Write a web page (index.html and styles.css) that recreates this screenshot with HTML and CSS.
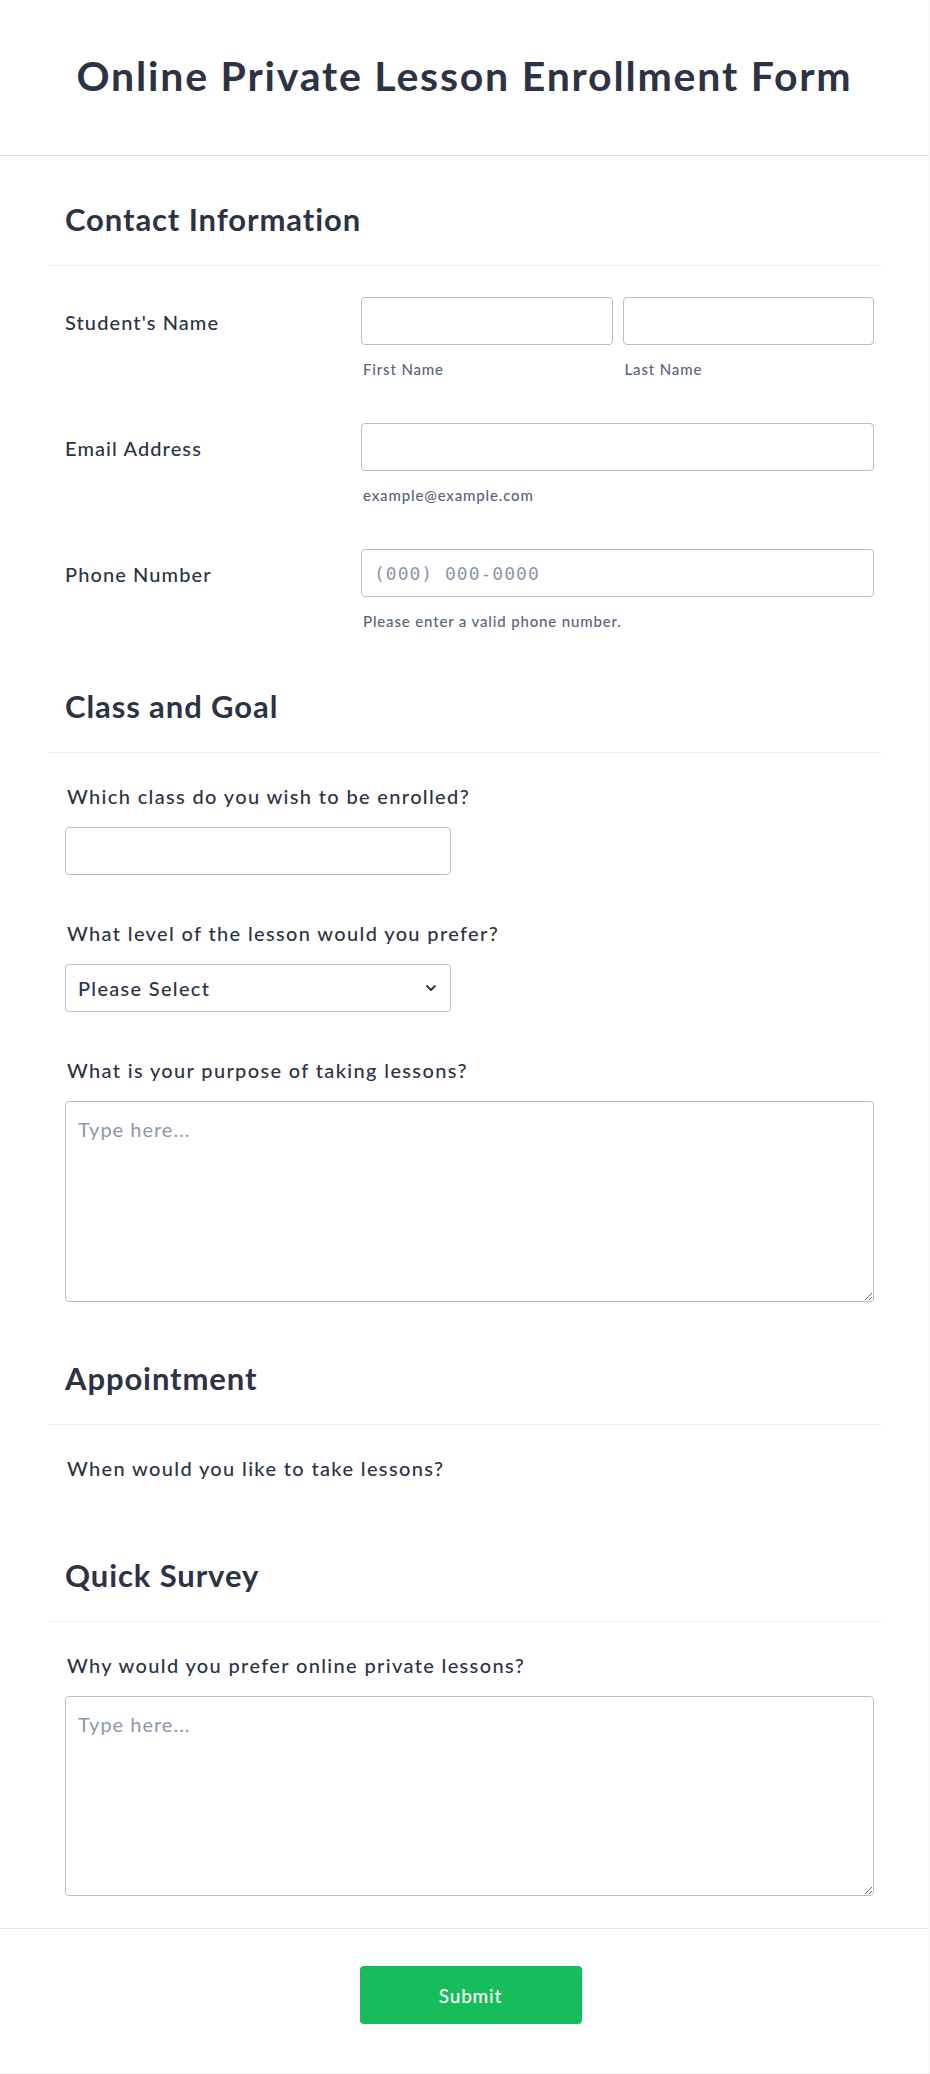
FILE: index.html
```html
<!DOCTYPE html>
<html lang="en">
<head>
<meta charset="utf-8">
<title>Online Private Lesson Enrollment Form</title>
<link rel="stylesheet" href="styles.css">
</head>
<body>
<div class="page">
  <header class="header">
    <h1 class="title">Online Private Lesson Enrollment Form</h1>
  </header>

  <main class="body">
    <section class="section">
      <div class="section-head"><h2 class="section-title">Contact Information</h2></div>
      <div class="fields">
        <div class="row">
          <div class="row-label">Student's Name</div>
          <div class="row-control">
            <div class="pair">
              <div class="pair-item">
                <input class="input" type="text">
                <div class="sublabel">First Name</div>
              </div>
              <div class="pair-item">
                <input class="input" type="text">
                <div class="sublabel">Last Name</div>
              </div>
            </div>
          </div>
        </div>
        <div class="row">
          <div class="row-label">Email Address</div>
          <div class="row-control">
            <input class="input" type="email">
            <div class="sublabel">example@example.com</div>
          </div>
        </div>
        <div class="row">
          <div class="row-label">Phone Number</div>
          <div class="row-control">
            <input class="input phone" type="tel" placeholder="(000) 000-0000">
            <div class="sublabel">Please enter a valid phone number.</div>
          </div>
        </div>
      </div>
    </section>

    <section class="section">
      <div class="section-head"><h2 class="section-title">Class and Goal</h2></div>
      <div class="fields stacked">
        <div class="vfield">
          <div class="vlabel">Which class do you wish to be enrolled?</div>
          <input class="input short" type="text">
        </div>
        <div class="vfield">
          <div class="vlabel">What level of the lesson would you prefer?</div>
          <div class="select short">
            <span>Please Select</span>
            <svg class="chev" width="12" height="8" viewBox="0 0 12 8"><path d="M2 2l4 4 4-4" fill="none" stroke="#2c3345" stroke-width="1.8" stroke-linecap="round" stroke-linejoin="round"/></svg>
          </div>
        </div>
        <div class="vfield">
          <div class="vlabel">What is your purpose of taking lessons?</div>
          <textarea class="textarea" placeholder="Type here..."></textarea>
        </div>
      </div>
    </section>

    <section class="section">
      <div class="section-head"><h2 class="section-title">Appointment</h2></div>
      <div class="fields stacked">
        <div class="vfield">
          <div class="vlabel">When would you like to take lessons?</div>
          <div class="appt-space"></div>
        </div>
      </div>
    </section>

    <section class="section">
      <div class="section-head"><h2 class="section-title">Quick Survey</h2></div>
      <div class="fields stacked last">
        <div class="vfield">
          <div class="vlabel">Why would you prefer online private lessons?</div>
          <textarea class="textarea tall2" placeholder="Type here..."></textarea>
        </div>
      </div>
    </section>
  </main>

  <footer class="footer">
    <button class="submit" type="button">Submit</button>
  </footer>
</div>
</body>
</html>
```

FILE: styles.css
```css
* { box-sizing: border-box; }

html, body {
  margin: 0;
  padding: 0;
  background: #ffffff;
}

body {
  font-family: Lato, "Noto Sans", sans-serif;
  color: #2c3345;
}

.page {
  width: 930px;
  min-height: 2074px;
  border-right: 1px solid #f3f3f6;
  border-bottom: 1px solid #f3f3f6;
}

.header {
  height: 156px;
  border-bottom: 1px solid #dcdee8;
  display: flex;
  align-items: center;
  justify-content: center;
}

.title {
  margin: 0;
  font-size: 41px;
  line-height: 48px;
  font-weight: 700;
  color: #2c3345;
  letter-spacing: 1.8px;
  padding-bottom: 3px;
}

.body {
  padding: 0 48px;
}

.section-head {
  padding: 45px 17px 28px;
  border-bottom: 1px solid #eeeff3;
}

.section-title {
  margin: 0;
  font-size: 31px;
  line-height: 36px;
  font-weight: 700;
  color: #2c3345;
  letter-spacing: 0.9px;
}

.fields {
  padding: 31px 7px 13px 17px;
  display: flex;
  flex-direction: column;
  gap: 45px;
}

.fields.stacked {
  padding-top: 32px;
  gap: 47px;
}

.fields.last {
  padding-bottom: 32px;
}

.row {
  display: flex;
  align-items: flex-start;
}

.row-label {
  width: 296px;
  flex: none;
  font-size: 20px;
  line-height: 22px;
  font-weight: 500;
  padding-top: 14px;
  letter-spacing: 1.1px;
}

.row-control {
  flex: 1;
}

.pair {
  display: flex;
  gap: 10px;
}

.pair-item {
  flex: 1;
}

.input {
  display: block;
  width: 100%;
  height: 48px;
  border: 1px solid #b8bdc9;
  border-radius: 4px;
  background: #fff;
  font-family: Lato, "Noto Sans", sans-serif;
  font-size: 18px;
  padding: 0 14px;
  color: #2c3345;
  margin: 0;
}

.input.phone {
  font-family: "DejaVu Sans Mono", monospace;
  font-size: 18px;
  letter-spacing: 1px;
  padding: 0 12px;
}

.input.phone::placeholder {
  color: #8c97ab;
}

.sublabel {
  margin-top: 15px;
  padding-left: 2px;
  font-size: 15px;
  line-height: 18px;
  color: #57647e;
  letter-spacing: 0.85px;
  font-weight: 500;
}

.vfield {
  display: flex;
  flex-direction: column;
}

.vlabel {
  font-size: 20px;
  line-height: 22px;
  font-weight: 500;
  padding-left: 2px;
  margin-bottom: 20px;
  letter-spacing: 1.35px;
}

.short {
  width: 386px;
}

.select {
  height: 48px;
  border: 1px solid #b8bdc9;
  border-radius: 4px;
  display: flex;
  align-items: center;
  justify-content: space-between;
  padding: 0 13px 0 12px;
  font-size: 20px;
  font-weight: 500;
  color: #2c3345;
  letter-spacing: 1.3px;
}

.chev {
  display: block;
}

.textarea {
  display: block;
  width: 100%;
  height: 201px;
  border: 1px solid #b8bdc9;
  border-radius: 4px;
  padding: 15px 12px;
  font-family: Lato, "Noto Sans", sans-serif;
  font-size: 20px;
  line-height: 24px;
  letter-spacing: 1px;
  color: #2c3345;
  margin: 0;
  resize: vertical;
}

.textarea::placeholder {
  color: #8c97ab;
}

.textarea.tall2 {
  height: 200px;
}

.appt-space {
  height: 0;
  margin-top: -20px;
  padding-bottom: 20px;
}

.footer {
  border-top: 1px solid #e4e6ee;
  display: flex;
  justify-content: center;
  padding-top: 37px;
  padding-left: 12px;
}

.submit {
  width: 222px;
  height: 58px;
  border: none;
  border-radius: 4px;
  background: #18bd5b;
  color: #ffffff;
  font-family: Lato, "Noto Sans", sans-serif;
  font-size: 19px;
  font-weight: 500;
  letter-spacing: 0.8px;
  cursor: pointer;
}
```
